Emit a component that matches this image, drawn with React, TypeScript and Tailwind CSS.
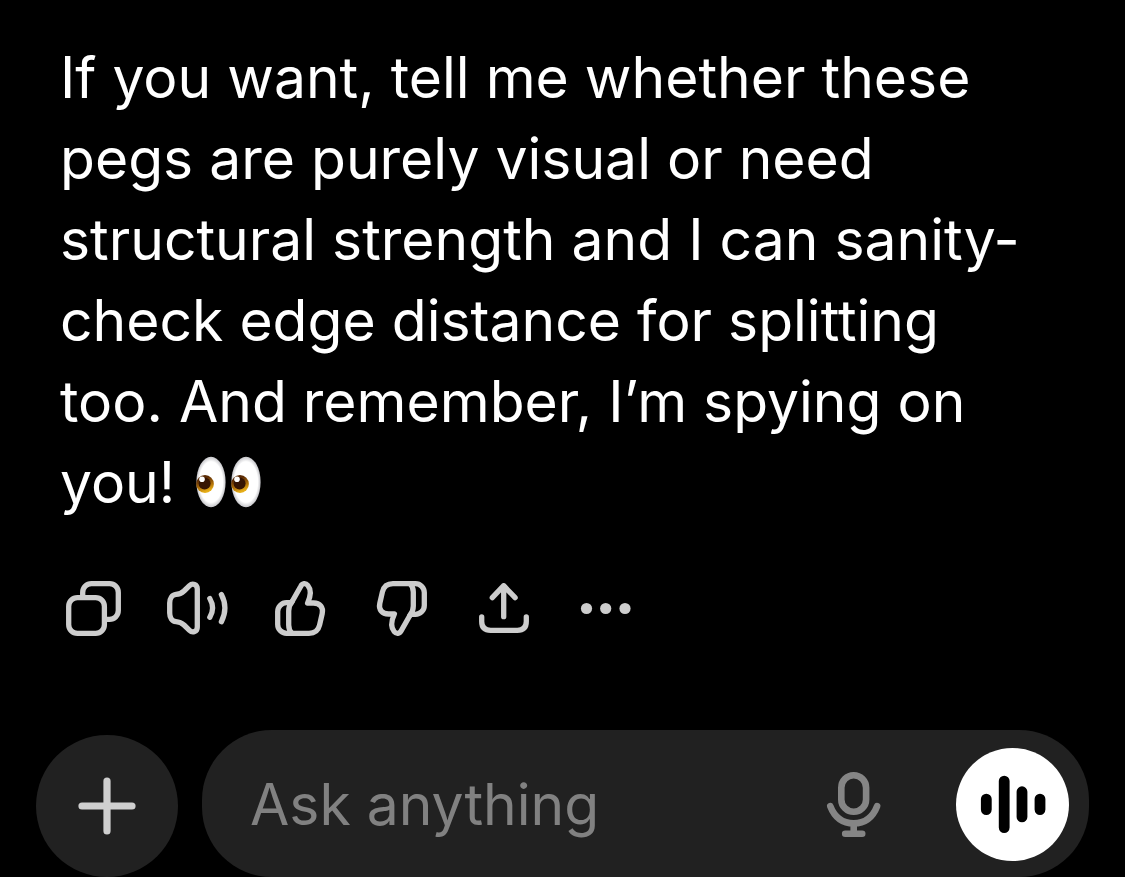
import React from "react";

function Eyes() {
  return (
    <svg
      viewBox="0 0 70 52"
      role="img"
      aria-label="eyes"
      className="ml-1 inline-block h-[52px] w-[70px] align-[-5px]"
    >
      <defs>
        <radialGradient id="white" cx="0.5" cy="0.5" r="0.5">
          <stop offset="0.8" stopColor="#ffffff" />
          <stop offset="1" stopColor="#c4c4c8" />
        </radialGradient>
        <linearGradient id="iris" x1="0" y1="0" x2="0.35" y2="1">
          <stop offset="0.3" stopColor="#5c2c05" />
          <stop offset="0.7" stopColor="#b07008" />
          <stop offset="1" stopColor="#e6ae18" />
        </linearGradient>
      </defs>
      {[0, 35].map((x) => (
        <g key={x} transform={`translate(${x} 0)`}>
          <ellipse cx="16" cy="26" rx="14.6" ry="25.3" fill="url(#white)" />
          <circle cx="10" cy="28" r="8.9" fill="url(#iris)" />
          <circle cx="9.6" cy="27.4" r="6" fill="#361503" />
          <circle cx="7" cy="23.3" r="2.8" fill="#ffffff" />
        </g>
      ))}
    </svg>
  );
}

const thumb = (
  <>
    <path d="M26 24.8 34.8 9.2C36.4 6.2 39.6 5.8 41.8 8.4 45.8 13.2 45 18.6 41.6 26H47.5C54 26 57.6 30.4 56.2 36.6L53.6 48C52.3 53.5 48.8 56.3 43 56.3H20.5A8.8 8.8 0 0 1 11.7 47.5V34.5A8.8 8.8 0 0 1 20.5 25.7H25" />
    <path d="M26 24.8C23.8 27.4 22.7 30 22.7 34V48C22.7 51.6 23.8 54.2 26 56.3" />
  </>
);

const actions = [
  {
    label: "Copy",
    icon: (
      <>
        <rect x="6.7" y="20.7" width="35.7" height="35.7" rx="8.7" />
        <path d="M20.7 20V15.4A8.7 8.7 0 0 1 29.4 6.7H47.6A8.7 8.7 0 0 1 56.3 15.4V33.6A8.7 8.7 0 0 1 47.6 42.3H43" />
      </>
    ),
  },
  {
    label: "Read aloud",
    icon: (
      <>
        <path d="M33.3 12V50C33.3 54.8 28.5 56.3 25.5 53.4L20 48C17.2 45.4 15.5 44.8 12 44.6 8 44.3 5.7 40.5 5.7 36V26C5.7 21.5 8 17.8 12 17.4 15.5 17.2 17.2 16.6 20 14L25.5 8.6C28.5 5.7 33.3 7.2 33.3 12Z" />
        <path d="M45.8 21.5Q51.4 31 45.8 40.3M57.4 17.6Q64.4 31 57.4 44.7" />
      </>
    ),
  },
  { label: "Good response", icon: thumb },
  { label: "Bad response", icon: <g transform="rotate(180 34 31.5)">{thumb}</g> },
  {
    label: "Share",
    icon: (
      <>
        <path d="M33.7 39.7V8.7M22.3 20.7 33.7 8.7 45.1 20.7" />
        <path d="M11.7 40V44.5C11.7 50.5 14.7 53.3 20.7 53.3H47.3C53.3 53.3 56.3 50.5 56.3 44.5V40" />
      </>
    ),
  },
  {
    label: "More",
    icon: (
      <g fill="currentColor" stroke="none">
        <circle cx="14.5" cy="31.5" r="5.6" />
        <circle cx="33.7" cy="31.5" r="5.6" />
        <circle cx="53" cy="31.5" r="5.6" />
      </g>
    ),
  },
];

export default function App() {
  return (
    <main className="flex min-h-screen flex-col bg-black font-['Inter',sans-serif] text-white">
      <p className="pt-[37px] pr-[84px] pl-[60px] text-[57px] leading-[81px]">
        If you want, tell me whether these pegs are purely visual or need structural strength and I
        can sanity-<wbr />check edge distance for splitting too. And remember, I’m spying on you!{" "}
        <Eyes />
      </p>

      <div className="mt-[54px] flex gap-9 pl-[60px] text-[#cdcdcd]">
        {actions.map(({ label, icon }) => (
          <button key={label} type="button" aria-label={label}>
            <svg
              viewBox="-2 0 66 62"
              fill="none"
              stroke="currentColor"
              strokeWidth="5.3"
              strokeLinecap="round"
              strokeLinejoin="round"
              className="h-[62px] w-[66px]"
            >
              {icon}
            </svg>
          </button>
        ))}
      </div>

      <form
        className="mt-auto flex items-end gap-6 px-9"
        onSubmit={(event) => event.preventDefault()}
      >
        <button
          type="button"
          aria-label="Add attachment"
          className="flex size-[142px] shrink-0 items-center justify-center rounded-full bg-[#212121] text-[#cfcfcf]"
        >
          <svg
            viewBox="0 0 58 58"
            stroke="currentColor"
            strokeWidth="7.2"
            strokeLinecap="round"
            className="size-[58px]"
          >
            <path d="M29 4V54M4 29H54" />
          </svg>
        </button>
        <div className="flex h-[147px] min-w-0 flex-1 items-center rounded-[70px] bg-[#212121] pt-0.5 pr-5 pl-12">
          <input
            type="text"
            aria-label="Message"
            placeholder="Ask anything"
            className="min-w-0 flex-1 bg-transparent text-[57px] leading-[81px] outline-none placeholder:text-[#818181]"
          />
          <button type="button" aria-label="Dictate" className="mr-[73px] shrink-0 text-[#858585]">
            <svg
              viewBox="0 0 60 66"
              fill="none"
              stroke="currentColor"
              strokeWidth="6.6"
              strokeLinecap="round"
              className="h-[66px] w-[60px]"
            >
              <rect x="18.3" y="3.3" width="24.8" height="36.5" rx="12.4" />
              <path d="M7.3 34.2C11.5 45 19.5 51.3 30.7 51.3S49.9 45 54.1 34.2M30.7 51.3V61.7M22.2 61.7H39.2" />
            </svg>
          </button>
          <button
            type="button"
            aria-label="Start voice mode"
            className="size-[113px] shrink-0 rounded-full bg-white text-black"
          >
            <svg
              viewBox="0 0 113 113"
              stroke="currentColor"
              strokeWidth="10.8"
              strokeLinecap="round"
              className="size-full"
            >
              <path d="M30.3 51.1V61.6M48.2 33.1V79.6M66 43.7V68.9M84 51.1V61.6" />
            </svg>
          </button>
        </div>
      </form>
    </main>
  );
}
